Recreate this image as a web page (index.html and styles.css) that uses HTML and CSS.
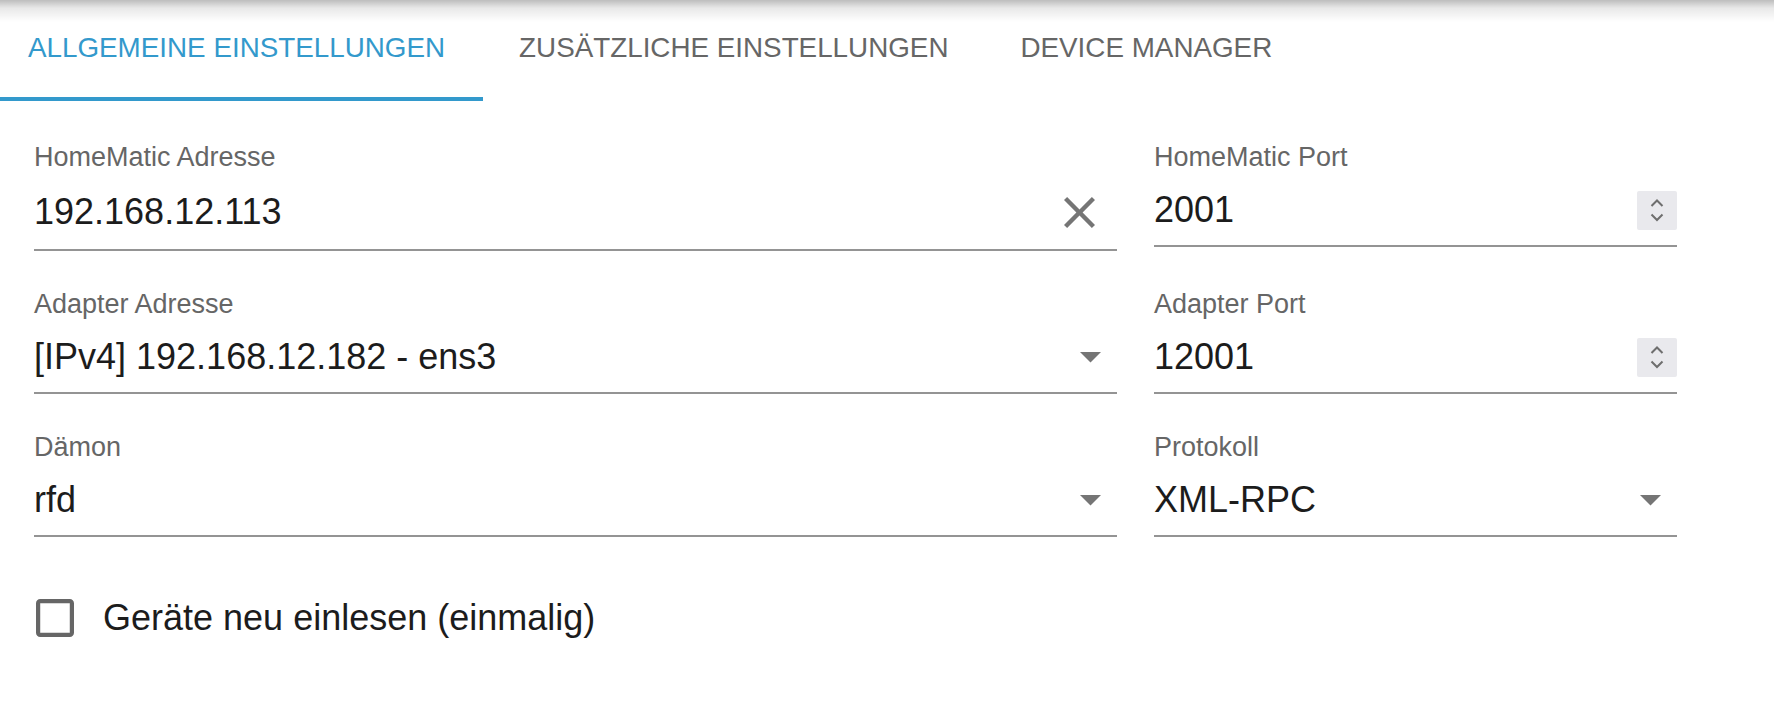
FILE: index.html
```html
<!DOCTYPE html>
<html lang="de">
<head>
<meta charset="utf-8">
<title>Einstellungen</title>
<link rel="stylesheet" href="styles.css">
</head>
<body>
<div class="tabs">
  <div class="tab tab-first active">ALLGEMEINE EINSTELLUNGEN</div>
  <div class="tab">ZUSÄTZLICHE EINSTELLUNGEN</div>
  <div class="tab">DEVICE MANAGER</div>
</div>

<div class="form">
  <div class="field">
    <div class="label">HomeMatic Adresse</div>
    <div class="input-row">
      <div class="value">192.168.12.113</div>
      <div class="clear-btn">
        <svg class="clear-icon" viewBox="5 5 14 14" width="31" height="31"><path fill="#757575" d="M19 6.41 17.59 5 12 10.59 6.41 5 5 6.41 10.59 12 5 17.59 6.41 19 12 13.41 17.59 19 19 17.59 13.41 12z"/></svg>
      </div>
    </div>
  </div>
  <div class="field">
    <div class="label">HomeMatic Port</div>
    <div class="input-row">
      <div class="value">2001</div>
      <div class="spinner">
        <svg viewBox="0 0 40 39" width="40" height="39"><path d="M14.5 15 20 9.5l5.5 5.5" fill="none" stroke="#6e6e6e" stroke-width="2"/><path d="M14.5 23.5 20 29l5.5-5.5" fill="none" stroke="#6e6e6e" stroke-width="2"/></svg>
      </div>
    </div>
  </div>

  <div class="field">
    <div class="label">Adapter Adresse</div>
    <div class="input-row">
      <div class="value">[IPv4] 192.168.12.182 - ens3</div>
      <svg class="arrow" viewBox="7 10 10 5" width="21" height="10.5"><path fill="#757575" d="M7 10l5 5 5-5z"/></svg>
    </div>
  </div>
  <div class="field">
    <div class="label">Adapter Port</div>
    <div class="input-row">
      <div class="value">12001</div>
      <div class="spinner">
        <svg viewBox="0 0 40 39" width="40" height="39"><path d="M14.5 15 20 9.5l5.5 5.5" fill="none" stroke="#6e6e6e" stroke-width="2"/><path d="M14.5 23.5 20 29l5.5-5.5" fill="none" stroke="#6e6e6e" stroke-width="2"/></svg>
      </div>
    </div>
  </div>

  <div class="field">
    <div class="label">Dämon</div>
    <div class="input-row">
      <div class="value">rfd</div>
      <svg class="arrow" viewBox="7 10 10 5" width="21" height="10.5"><path fill="#757575" d="M7 10l5 5 5-5z"/></svg>
    </div>
  </div>
  <div class="field">
    <div class="label">Protokoll</div>
    <div class="input-row">
      <div class="value">XML-RPC</div>
      <svg class="arrow" viewBox="7 10 10 5" width="21" height="10.5"><path fill="#757575" d="M7 10l5 5 5-5z"/></svg>
    </div>
  </div>
</div>

<label class="check">
  <svg class="check-box" viewBox="3 3 18 18" width="38" height="38"><path fill="#666" d="M19 5v14H5V5h14m0-2H5c-1.11 0-2 .9-2 2v14c0 1.1.89 2 2 2h14c1.1 0 2-.9 2-2V5c0-1.1-.9-2-2-2z"/></svg>
  <span class="check-label">Geräte neu einlesen (einmalig)</span>
</label>
</body>
</html>
```

FILE: styles.css
```css
html, body {
  margin: 0;
  padding: 0;
  background: #fff;
}

body {
  font-family: "Liberation Sans", Arial, sans-serif;
  color: #1c1c1c;
}

.tabs {
  display: flex;
  height: 101px;
  background: linear-gradient(to bottom, rgba(0, 0, 0, 0.26) 0px, rgba(0, 0, 0, 0.09) 8px, rgba(0, 0, 0, 0) 22px), #fff;
}

.tab {
  box-sizing: border-box;
  height: 101px;
  padding: 31.5px 36px 0;
  font-size: 27.8px;
  line-height: 32px;
  color: #666;
  white-space: nowrap;
  border-bottom: 4px solid transparent;
}

.tab-first {
  padding-left: 28px;
  padding-right: 38px;
}

.tab.active {
  color: #3399cc;
  border-bottom-color: #3399cc;
}

.form {
  display: grid;
  grid-template-columns: 1083px 523px;
  column-gap: 37px;
  row-gap: 40.4px;
  align-items: start;
  padding: 43.3px 0 0 34px;
}

.label {
  font-size: 27px;
  line-height: 27px;
  color: #666;
  margin-bottom: 21px;
}

.input-row {
  display: flex;
  align-items: center;
  padding-bottom: 16.6px;
  border-bottom: 2px solid #949494;
}

.value {
  flex: 1;
  font-size: 36px;
  line-height: 36px;
  color: #1c1c1c;
  white-space: nowrap;
}

.clear-btn {
  display: flex;
  align-items: center;
  justify-content: center;
  width: 31px;
  height: 40px;
  margin-right: 22px;
}

.clear-icon {
  display: block;
}

.spinner {
  width: 40px;
  height: 39px;
  margin: -1.5px 0;
  background: #e9e9ed;
  border-radius: 2px;
}

.spinner svg {
  display: block;
}

.arrow {
  display: block;
  margin-right: 16px;
}

.check {
  display: flex;
  align-items: center;
  margin: 61.5px 0 0 35.5px;
}

.check-box {
  display: block;
  flex: none;
}

.check-label {
  margin-left: 29.5px;
  font-size: 36px;
  line-height: 40px;
  color: #1c1c1c;
}
```
